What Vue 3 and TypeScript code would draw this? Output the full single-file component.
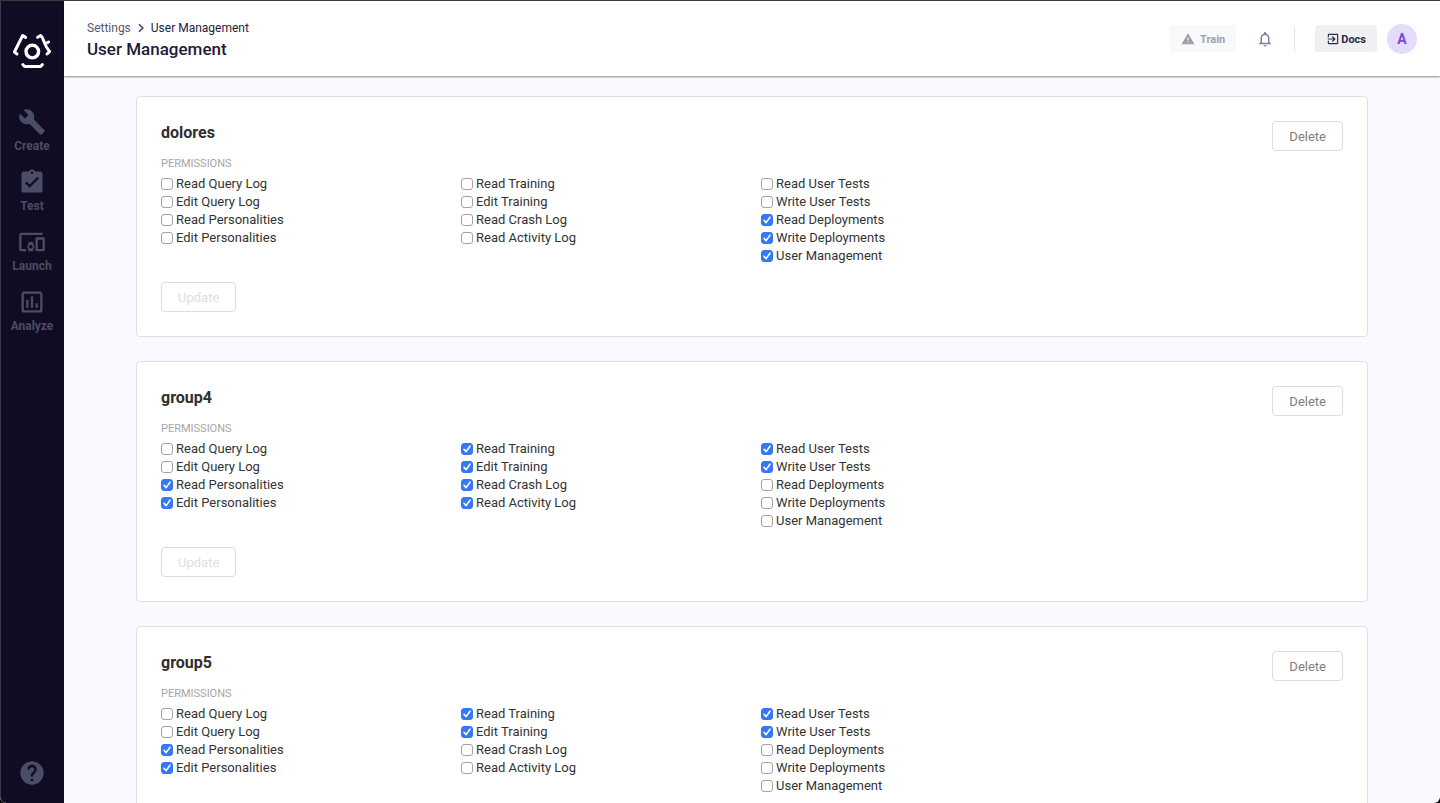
<script setup lang="ts">
import { reactive } from 'vue'

interface Permission {
  label: string
  granted: boolean
}
interface Group {
  name: string
  columns: Permission[][]
}

const labels: string[][] = [
  ['Read Query Log', 'Edit Query Log', 'Read Personalities', 'Edit Personalities'],
  ['Read Training', 'Edit Training', 'Read Crash Log', 'Read Activity Log'],
  ['Read User Tests', 'Write User Tests', 'Read Deployments', 'Write Deployments', 'User Management'],
]

function makeGroup(name: string, granted: string[]): Group {
  return {
    name,
    columns: labels.map((column) => column.map((label) => ({ label, granted: granted.includes(label) }))),
  }
}

const groups = reactive<Group[]>([
  makeGroup('dolores', ['Read Deployments', 'Write Deployments', 'User Management']),
  makeGroup('group4', [
    'Read Personalities', 'Edit Personalities',
    'Read Training', 'Edit Training', 'Read Crash Log', 'Read Activity Log',
    'Read User Tests', 'Write User Tests',
  ]),
  makeGroup('group5', [
    'Read Personalities', 'Edit Personalities',
    'Read Training', 'Edit Training',
    'Read User Tests', 'Write User Tests',
  ]),
])

const navItems = [
  {
    label: 'Create',
    icon: 'M22.7 19l-9.1-9.1c.9-2.3.4-5-1.5-6.9-2-2-5-2.4-7.4-1.3L9 6 6 9 1.6 4.7C.4 7.1.9 10.1 2.9 12.1c1.9 1.9 4.6 2.4 6.9 1.5l9.1 9.1c.4.4 1 .4 1.4 0l2.3-2.3c.5-.4.5-1.1.1-1.4z',
  },
  {
    label: 'Test',
    icon: 'M19 3h-4.18C14.4 1.84 13.3 1 12 1c-1.3 0-2.4.84-2.82 2H5c-1.1 0-2 .9-2 2v14c0 1.1.9 2 2 2h14c1.1 0 2-.9 2-2V5c0-1.1-.9-2-2-2zm-7 0c.55 0 1 .45 1 1s-.45 1-1 1-1-.45-1-1 .45-1 1-1zm-2 14l-4-4 1.41-1.41L10 14.17l6.59-6.59L18 9l-8 8z',
  },
  {
    label: 'Launch',
    icon: 'M3 6h18V4H3c-1.1 0-2 .9-2 2v12c0 1.1.9 2 2 2h4v-2H3V6zm10 6H9v1.78c-.61.55-1 1.33-1 2.22s.39 1.67 1 2.22V20h4v-1.78c.61-.55 1-1.34 1-2.22s-.39-1.67-1-2.22V12zm-2 5.5c-.83 0-1.5-.67-1.5-1.5s.67-1.5 1.5-1.5 1.5.67 1.5 1.5-.67 1.5-1.5 1.5zM22 8h-6c-.5 0-1 .5-1 1v10c0 .5.5 1 1 1h6c.5 0 1-.5 1-1V9c0-.5-.5-1-1-1zm-1 10h-4v-8h4v8z',
  },
  {
    label: 'Analyze',
    icon: 'M9 17H7v-7h2v7zm4 0h-2V7h2v10zm4 0h-2v-4h2v4zm2 2H5V5h14v14zm0-16H5c-1.1 0-2 .9-2 2v14c0 1.1.9 2 2 2h14c1.1 0 2-.9 2-2V5c0-1.1-.9-2-2-2z',
  },
]
</script>

<template>
  <div class="window">
    <aside class="sidebar">
      <a class="logo" href="#" aria-label="Home">
        <svg viewBox="0 0 40 36" width="40" height="36" fill="none" stroke="#fff" stroke-width="3" stroke-linejoin="round" stroke-linecap="round">
          <path d="M13.6 4.4 10.6 2.6 2.4 19 5 21" />
          <path d="M25.6 4.2 28.6 2.6Q30.4 3.6 31.4 7.2L33 10.8 36.6 9M33 10.8 34.4 14 37.6 18.6 35 21" />
          <circle cx="20.3" cy="18.6" r="6.3" stroke-width="3.4" />
          <path d="M10.8 31.6 12.6 33.6H28.6L30.4 31.6" />
        </svg>
      </a>
      <nav class="nav">
        <a v-for="item in navItems" :key="item.label" class="nav-item" href="#">
          <svg viewBox="0 0 24 24" width="28" height="28" fill="currentColor"><path :d="item.icon" /></svg>
          <span>{{ item.label }}</span>
        </a>
      </nav>
      <button class="help" type="button" aria-label="Help">
        <svg viewBox="0 0 24 24" width="28" height="28" fill="currentColor">
          <path d="M12 2C6.48 2 2 6.48 2 12s4.48 10 10 10 10-4.48 10-10S17.52 2 12 2zm1 17h-2v-2h2v2zm2.07-7.75l-.9.92C13.45 12.9 13 13.5 13 15h-2v-.5c0-1.1.45-2.1 1.17-2.83l1.24-1.26c.37-.36.59-.86.59-1.41 0-1.1-.9-2-2-2s-2 .9-2 2H8c0-2.21 1.79-4 4-4s4 1.79 4 4c0 .88-.36 1.68-.93 2.25z" />
        </svg>
      </button>
    </aside>

    <div class="page">
      <header class="header">
        <div class="heading">
          <nav class="crumbs" aria-label="Breadcrumb">
            <a class="crumb" href="#">Settings</a>
            <svg viewBox="0 0 8 10" width="8" height="10" fill="none" stroke="#45435f" stroke-width="1.6"><path d="M2 1.2 5.8 5 2 8.8" /></svg>
            <a class="crumb current" href="#">User Management</a>
          </nav>
          <h1>User Management</h1>
        </div>
        <div class="actions">
          <button class="train" type="button" disabled>
            <svg viewBox="0 0 24 24" width="14" height="14" fill="currentColor"><path d="M1 21h22L12 2 1 21zm12-3h-2v-2h2v2zm0-4h-2v-4h2v4z" /></svg>
            <span>Train</span>
          </button>
          <button class="bell" type="button" aria-label="Notifications">
            <svg viewBox="0 0 24 24" width="18" height="18" fill="currentColor"><path d="M12 22c1.1 0 2-.9 2-2h-4c0 1.1.9 2 2 2zm6-6v-5c0-3.07-1.63-5.64-4.5-6.32V4c0-.83-.67-1.5-1.5-1.5s-1.5.67-1.5 1.5v.68C7.64 5.36 6 7.92 6 11v5l-2 2v1h16v-1l-2-2zm-2 1H8v-6c0-2.48 1.51-4.5 4-4.5s4 2.02 4 4.5v6z" /></svg>
          </button>
          <span class="divider"></span>
          <a class="docs" href="#">
            <svg viewBox="0 0 24 24" width="14" height="14" fill="currentColor"><path d="M10.09 15.59L11.5 17l5-5-5-5-1.41 1.41L12.67 11H3v2h9.67l-2.58 2.59zM19 3H5c-1.11 0-2 .9-2 2v4h2V5h14v14H5v-4H3v4c0 1.1.89 2 2 2h14c1.1 0 2-.9 2-2V5c0-1.1-.9-2-2-2z" /></svg>
            <span>Docs</span>
          </a>
          <button class="avatar" type="button">A</button>
        </div>
      </header>

      <main class="content">
        <section v-for="group in groups" :key="group.name" class="card">
          <div class="card-head">
            <h2>{{ group.name }}</h2>
            <button class="btn delete" type="button">Delete</button>
          </div>
          <p class="caption">PERMISSIONS</p>
          <div class="columns">
            <div v-for="(column, index) in group.columns" :key="index" class="column">
              <label v-for="permission in column" :key="permission.label" class="permission">
                <input v-model="permission.granted" type="checkbox" />
                <span>{{ permission.label }}</span>
              </label>
            </div>
          </div>
          <button class="btn update" type="button" disabled>Update</button>
        </section>
      </main>
    </div>
  </div>
</template>

<style>
body {
  background: #000;
}
</style>

<style scoped>
* {
  box-sizing: border-box;
}
.window {
  display: flex;
  height: 100vh;
  overflow: hidden;
  border-top: 1px solid #3b3b3f;
  border-radius: 0 0 6px 6px;
  background: #f9faff;
  font-family: Roboto, "Liberation Sans", sans-serif;
  color: #333;
}
a {
  color: inherit;
  text-decoration: none;
}
button {
  font-family: inherit;
  margin: 0;
  padding: 0;
  border: 0;
  background: none;
}
svg {
  display: block;
  flex: none;
}
.sidebar {
  display: flex;
  flex-direction: column;
  align-items: center;
  flex: none;
  width: 64px;
  padding: 32px 1px 16px 0;
  background: #0f0c24;
  border-left: 1px solid #3b3950;
  border-radius: 0 0 0 6px;
  color: #4b4c65;
}
.nav {
  display: flex;
  flex-direction: column;
  gap: 15px;
  margin-top: 39px;
}
.nav-item {
  display: flex;
  flex-direction: column;
  align-items: center;
  gap: 3px;
  font-size: 12px;
  line-height: 14px;
  font-weight: 700;
}
.help {
  margin-top: auto;
  color: inherit;
}
.page {
  display: flex;
  flex-direction: column;
  flex: 1;
  min-width: 0;
}
.header {
  display: flex;
  align-items: center;
  justify-content: space-between;
  flex: none;
  height: 75px;
  padding: 0 23px;
  background: #fff;
  box-shadow: 0 1px 2px rgba(0, 0, 0, 0.45);
  z-index: 1;
}
.heading {
  padding-top: 2px;
}
.crumbs {
  display: flex;
  align-items: center;
  gap: 6px;
  font-size: 12px;
  line-height: 16px;
  color: #1e1b3a;
}
.crumb:first-child {
  color: #58566e;
}
h1 {
  margin: 3px 0 0;
  font-size: 17px;
  line-height: 20px;
  font-weight: 500;
  color: #1e1b3a;
}
.actions {
  display: flex;
  align-items: center;
}
.train,
.docs {
  display: flex;
  align-items: center;
  height: 27px;
  padding: 1px 11px 0;
  border-radius: 3px;
  font-size: 11px;
  font-weight: 700;
}
.train {
  gap: 5px;
  background: #f8f9fa;
  color: #9f9eac;
}
.bell {
  margin-left: 20px;
  color: #83819a;
}
.divider {
  width: 1px;
  height: 24px;
  margin: 0 20px;
  background: #e4e4e8;
}
.docs {
  gap: 1px;
  background: #eff0f2;
  color: #2b2945;
}
.avatar {
  width: 30px;
  height: 30px;
  margin-left: 10px;
  border-radius: 50%;
  background: #e4dcf9;
  color: #7747dc;
  font-size: 14px;
  font-weight: 700;
}
.content {
  display: flex;
  flex-direction: column;
  gap: 24px;
  flex: 1;
  min-height: 0;
  padding: 20px 72px;
  overflow-y: auto;
  scrollbar-width: none;
}
.card {
  flex: none;
  padding: 24px;
  border: 1px solid #e0e0e0;
  border-radius: 4px;
  background: #fff;
}
.card-head {
  display: flex;
  align-items: flex-start;
  justify-content: space-between;
}
h2 {
  margin: 0;
  font-size: 16px;
  line-height: 24px;
  font-weight: 700;
  color: #2f2f2f;
}
.caption {
  margin: 6px 0 4px;
  font-size: 11px;
  line-height: 14px;
  color: #a6a6a6;
}
.columns {
  display: flex;
}
.column {
  width: 300px;
}
.permission {
  display: flex;
  align-items: center;
  gap: 3px;
  font-size: 13px;
  line-height: 18px;
}
input {
  appearance: none;
  width: 12px;
  height: 12px;
  margin: 0;
  border: 1px solid #a3a3a3;
  border-radius: 3px;
  background: #fff;
}
input:checked {
  border-color: #3478f6;
  background: #3478f6 url("data:image/svg+xml,%3Csvg xmlns='http://www.w3.org/2000/svg' viewBox='0 0 10 10'%3E%3Cpath d='M2 5.3 4.1 7.6 8 2.2' fill='none' stroke='white' stroke-width='1.6' stroke-linecap='round' stroke-linejoin='round'/%3E%3C/svg%3E") center / 10px 10px no-repeat;
}
.btn {
  height: 30px;
  padding: 2px 16px 0;
  border: 1px solid #dcdcdc;
  border-radius: 4px;
  background: #fff;
  font-size: 13px;
  line-height: 18px;
  color: #808080;
}
.update {
  margin-top: 17px;
  color: #e0e0e0;
}
</style>
